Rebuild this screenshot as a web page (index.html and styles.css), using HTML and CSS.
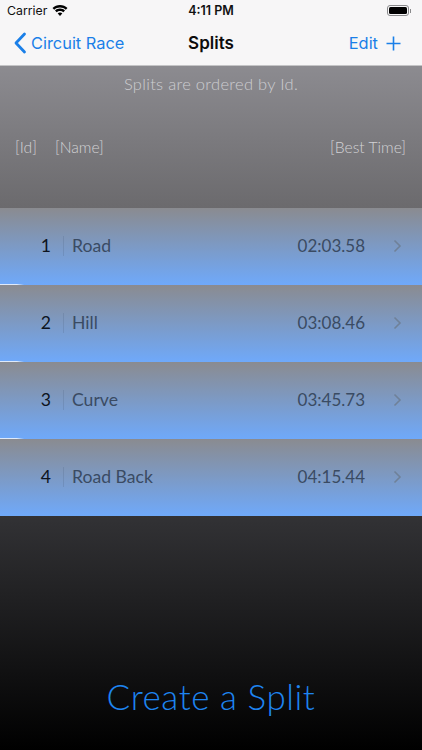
FILE: index.html
```html
<!DOCTYPE html>
<html lang="en">
<head>
<meta charset="utf-8">
<title>Splits</title>
<link rel="stylesheet" href="styles.css">
</head>
<body>
<div class="screen">
  <div class="topbar">
    <div class="status">
      <div class="status-left">
        <span>Carrier</span>
        <svg class="wifi" width="16" height="12" viewBox="0 0 16 12"><path d="M8 2.400c2.300 0 4.300.9 5.800 2.300l1.700-1.800C13.500 1 10.900 0 8 0S2.500 1 .5 2.900l1.700 1.800C3.700 3.300 5.700 2.400 8 2.400z"/><path d="M8 6c1.300 0 2.400.5 3.300 1.300L13 5.500C11.600 4.300 9.900 3.600 8 3.600s-3.600.7-5 1.900l1.700 1.800C5.600 6.500 6.700 6 8 6z"/><path d="M8 7.600c-.9 0-1.700.3-2.300.9L8 11l2.300-2.500c-.6-.6-1.400-.9-2.300-.9z"/></svg>
      </div>
      <span class="clock">4:11 PM</span>
      <div class="status-right">
        <div class="battery"><div class="battery-fill"></div></div>
        <div class="battery-cap"></div>
      </div>
    </div>
    <nav class="nav">
      <a class="back">
        <svg width="14" height="22" viewBox="0 0 14 22"><path d="M11.500 2 L3 11 L11.500 20" fill="none" stroke="#1a7fe8" stroke-width="2.800" stroke-linecap="round" stroke-linejoin="round"/></svg>
        <span>Circuit Race</span>
      </a>
      <span class="title">Splits</span>
      <div class="actions">
        <span>Edit</span>
        <svg width="15" height="15" viewBox="0 0 15 15"><path d="M7.500 .5V14.500M.5 7.500H14.500" stroke="#1a7fe8" stroke-width="1.600" fill="none"/></svg>
      </div>
    </nav>
  </div>

  <header class="head">
    <p class="note">Splits are ordered by Id.</p>
    <div class="cols">
      <span class="col-id">[Id]</span>
      <span class="col-name">[Name]</span>
      <span class="col-time">[Best Time]</span>
    </div>
  </header>

  <section class="list">
    <div class="row">
      <span class="id">1</span><span class="name">Road</span><span class="time">02:03.58</span>
      <svg class="chev" width="9" height="14" viewBox="0 0 9 14"><path d="M1.500 1.500L7 7L1.500 12.500"/></svg>
    </div>
    <div class="row">
      <span class="id">2</span><span class="name">Hill</span><span class="time">03:08.46</span>
      <svg class="chev" width="9" height="14" viewBox="0 0 9 14"><path d="M1.500 1.500L7 7L1.500 12.500"/></svg>
    </div>
    <div class="row">
      <span class="id">3</span><span class="name">Curve</span><span class="time">03:45.73</span>
      <svg class="chev" width="9" height="14" viewBox="0 0 9 14"><path d="M1.500 1.500L7 7L1.500 12.500"/></svg>
    </div>
    <div class="row">
      <span class="id">4</span><span class="name">Road Back</span><span class="time">04:15.44</span>
      <svg class="chev" width="9" height="14" viewBox="0 0 9 14"><path d="M1.500 1.500L7 7L1.500 12.500"/></svg>
    </div>
  </section>

  <footer class="foot">
    <span class="create">Create a Split</span>
  </footer>
</div>
</body>
</html>
```
FILE: styles.css
```css
* { box-sizing: border-box; }
html, body { margin: 0; padding: 0; }
body { width: 422px; height: 750px; overflow: hidden; font-family: Lato, "Open Sans", sans-serif; background: #000; }
.screen { width: 422px; height: 750px; display: flex; flex-direction: column; }

.topbar { height: 66px; background: #f7f6f7; border-bottom: 1px solid #c4c4c6; flex: none; }
.status { height: 21px; padding: 0 11px 0 7px; display: flex; align-items: center; justify-content: space-between; position: relative; font-family: Inter, "Liberation Sans", sans-serif; font-size: 12.300px; color: #111; }
.status-left { display: flex; align-items: center; gap: 5px; }
.wifi { fill: #000; }
.clock { position: absolute; left: 0; right: 0; text-align: center; font-weight: 600; font-size: 12.500px; }
.status-right { display: flex; align-items: center; gap: 1px; }
.battery { width: 22px; height: 11px; border: 1px solid #8a8a8c; border-radius: 3px; padding: 1px; }
.battery-fill { width: 100%; height: 100%; background: #000; border-radius: 1.500px; }
.battery-cap { width: 1px; height: 4px; background: #8a8a8c; }

.nav { height: 44px; position: relative; display: flex; align-items: center; justify-content: space-between; padding: 0 21px 0 13px; font-family: Inter, "Liberation Sans", sans-serif; font-size: 16.400px; color: #1a7fe8; }
.back { display: flex; align-items: center; gap: 4px; }
.title { position: absolute; left: 0; right: 0; text-align: center; color: #0c0c0c; font-weight: 600; font-size: 17px; }
.actions { display: flex; align-items: center; gap: 8px; position: relative; }

.head { height: 142px; flex: none; background: linear-gradient(#8c8b90, #6b6a6d); color: #d2d2d5; font-size: 15.700px; font-weight: 300; padding-top: 8px; }
.note { margin: 0; text-align: center; line-height: 20px; letter-spacing: .3px; color: #cdcdd1; font-size: 16.500px; }
.cols { display: flex; margin-top: 43px; padding: 0 16px 0 15px; line-height: 20px; }
.col-id { width: 40px; }
.col-name { flex: 1; }

.row { height: 77px; position: relative; display: flex; align-items: center; background: linear-gradient(#8a8b90, #6fa9fa); font-size: 17.600px; color: #3a4b63; font-weight: 400; padding: 0 20px 2px 0; }
.row:not(:last-child)::after { content: ""; position: absolute; left: 0; bottom: 0; width: 24px; height: 1px; background: linear-gradient(90deg, #dfeafa 70%, rgba(223, 234, 250, 0)); }
.id { width: 51px; text-align: right; color: #0d1420; }
.name { margin-left: 12px; padding-left: 8px; border-left: 1px solid rgba(70, 90, 120, .2); line-height: 20px; flex: 1; }
.time { font-size: 17px; }
.chev { margin-left: 28px; fill: none; stroke: #6f8199; stroke-width: 1.600; }

.foot { flex: 1; background: linear-gradient(#323235, #000); display: flex; justify-content: center; align-items: flex-end; padding-bottom: 33px; }
.create { color: #1e84f0; font-size: 35px; font-weight: 300; line-height: 42px; letter-spacing: .55px; }
```
